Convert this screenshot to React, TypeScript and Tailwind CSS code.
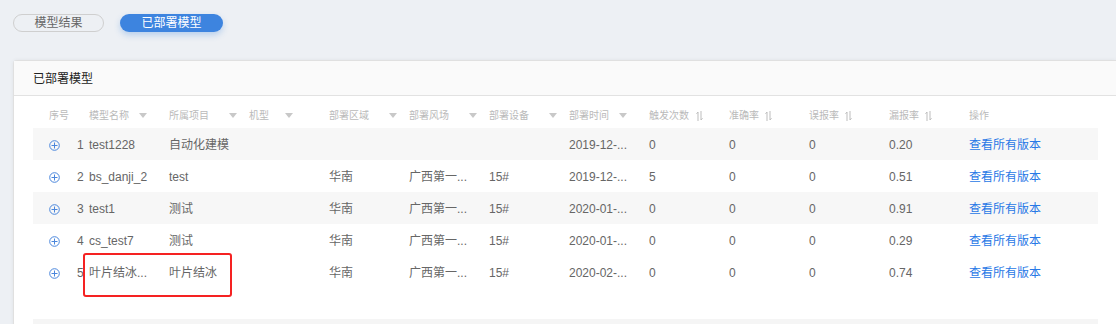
import React from "react";

const FONT = { fontFamily: '"Liberation Sans", "Noto Sans CJK SC", sans-serif' };

function Caret() {
  return (
    <svg width="8" height="5" viewBox="0 0 8 5" className="shrink-0">
      <path d="M0 0 L8 0 L4 5 Z" fill="#c8c8c8" />
    </svg>
  );
}

function SortIcon() {
  return (
    <svg width="7" height="10" viewBox="0 0 7 10" className="shrink-0">
      <path d="M2 10 V1 L0.5 2.8" stroke="#bdbdbd" strokeWidth="1" fill="none" />
      <path d="M5 0 V9 L6.5 7.2" stroke="#bdbdbd" strokeWidth="1" fill="none" />
    </svg>
  );
}

function Plus() {
  return (
    <svg width="11" height="11" viewBox="0 0 11 11">
      <circle cx="5.5" cy="5.5" r="4.8" stroke="#4a86dc" strokeWidth="1" fill="none" />
      <path d="M2.5 5.5 H8.5 M5.5 2.5 V8.5" stroke="#4a86dc" strokeWidth="1" />
    </svg>
  );
}

type Row = {
  i: number;
  name: string;
  proj: string;
  region: string;
  farm: string;
  dev: string;
  time: string;
  trig: string;
  acc: string;
  fal: string;
  miss: string;
  gray: boolean;
};

const rows: Row[] = [
  { i: 1, name: "test1228", proj: "自动化建模", region: "", farm: "", dev: "", time: "2019-12-...", trig: "0", acc: "0", fal: "0", miss: "0.20", gray: true },
  { i: 2, name: "bs_danji_2", proj: "test", region: "华南", farm: "广西第一...", dev: "15#", time: "2019-12-...", trig: "5", acc: "0", fal: "0", miss: "0.51", gray: false },
  { i: 3, name: "test1", proj: "测试", region: "华南", farm: "广西第一...", dev: "15#", time: "2020-01-...", trig: "0", acc: "0", fal: "0", miss: "0.91", gray: true },
  { i: 4, name: "cs_test7", proj: "测试", region: "华南", farm: "广西第一...", dev: "15#", time: "2020-01-...", trig: "0", acc: "0", fal: "0", miss: "0.29", gray: false },
  { i: 5, name: "叶片结冰...", proj: "叶片结冰", region: "华南", farm: "广西第一...", dev: "15#", time: "2020-02-...", trig: "0", acc: "0", fal: "0", miss: "0.74", gray: false },
];

function HeadFilter({ label, w, gap }: { label: string; w: string; gap: string }) {
  return (
    <div className={`${w} flex items-center shrink-0`}>
      <span>{label}</span>
      <span className={gap}>
        <Caret />
      </span>
    </div>
  );
}

function HeadSort({ label, gap }: { label: string; gap: string }) {
  return (
    <div className="w-[80px] flex items-center shrink-0">
      <span>{label}</span>
      <span className={`${gap} flex items-center`}>
        <SortIcon />
      </span>
    </div>
  );
}

export default function App() {
  return (
    <div className="w-[1116px] h-[324px] bg-[#edf0f4] overflow-hidden relative" style={FONT}>
      <div className="flex items-center pt-[14px] pl-[13px] gap-[16px]">
        <div className="w-[91px] h-[18px] rounded-full border border-[#cfcfcf] flex items-center justify-center text-[12px] text-[#666]">
          模型结果
        </div>
        <div className="w-[103px] h-[18px] rounded-full bg-[#3d84df] flex items-center justify-center text-[12px] text-white shadow-[0_3px_6px_rgba(61,132,223,0.3)]">
          已部署模型
        </div>
      </div>

      <div className="ml-[13px] mt-[28px] bg-white border border-[#e0e0e0] rounded-tl-[4px] border-r-0 h-[300px] shadow-[0_0_4px_rgba(0,0,0,0.06)]">
        <div className="h-[35px] bg-[#fafafa] border-b border-[#e2e2e2] flex items-center pl-[19px] pt-[1px] text-[12px] text-[#222]">
          已部署模型
        </div>
        <div className="pl-[19px] w-[1084px]">
          <div className="h-[32px] flex items-center pt-[7px] text-[10px] text-[#bababa]">
            <div className="w-[56px] pl-[16px] shrink-0">序号</div>
            <HeadFilter label="模型名称" w="w-[80px]" gap="ml-[10px]" />
            <HeadFilter label="所属项目" w="w-[80px]" gap="ml-[20px]" />
            <HeadFilter label="机型" w="w-[80px]" gap="ml-[16px]" />
            <HeadFilter label="部署区域" w="w-[80px]" gap="ml-[20px]" />
            <HeadFilter label="部署风场" w="w-[80px]" gap="ml-[20px]" />
            <HeadFilter label="部署设备" w="w-[80px]" gap="ml-[20px]" />
            <HeadFilter label="部署时间" w="w-[80px]" gap="ml-[10px]" />
            <HeadSort label="触发次数" gap="ml-[7px]" />
            <HeadSort label="准确率" gap="ml-[6px]" />
            <HeadSort label="误报率" gap="ml-[6px]" />
            <HeadSort label="漏报率" gap="ml-[6px]" />
            <div className="w-[128px] shrink-0">操作</div>
          </div>
          {rows.map((r) => (
            <div
              key={r.i}
              className={`h-[32px] flex items-center pt-[2px] text-[12px] text-[#666] ${r.gray ? "bg-[#f7f7f7]" : "bg-white"}`}
            >
              <div className="w-[44px] pl-[16px] shrink-0 flex items-center">
                <Plus />
              </div>
              <div className="w-[12px] shrink-0">{r.i}</div>
              <div className="w-[80px] shrink-0 whitespace-nowrap">{r.name}</div>
              <div className="w-[80px] shrink-0 whitespace-nowrap">{r.proj}</div>
              <div className="w-[80px] shrink-0"></div>
              <div className="w-[80px] shrink-0">{r.region}</div>
              <div className="w-[80px] shrink-0 whitespace-nowrap">{r.farm}</div>
              <div className="w-[80px] shrink-0">{r.dev}</div>
              <div className="w-[80px] shrink-0 whitespace-nowrap">{r.time}</div>
              <div className="w-[80px] shrink-0">{r.trig}</div>
              <div className="w-[80px] shrink-0">{r.acc}</div>
              <div className="w-[80px] shrink-0">{r.fal}</div>
              <div className="w-[80px] shrink-0">{r.miss}</div>
              <div className="w-[128px] shrink-0 text-[#2878e6]">查看所有版本</div>
            </div>
          ))}
          <div className="h-[31px] bg-white"></div>
          <div className="h-[8px] bg-[#f5f5f5]"></div>
        </div>
      </div>

      <div className="absolute left-[83px] top-[253px] w-[149px] h-[44px] border-2 border-[#f52222] rounded-[3px] pointer-events-none"></div>
    </div>
  );
}
